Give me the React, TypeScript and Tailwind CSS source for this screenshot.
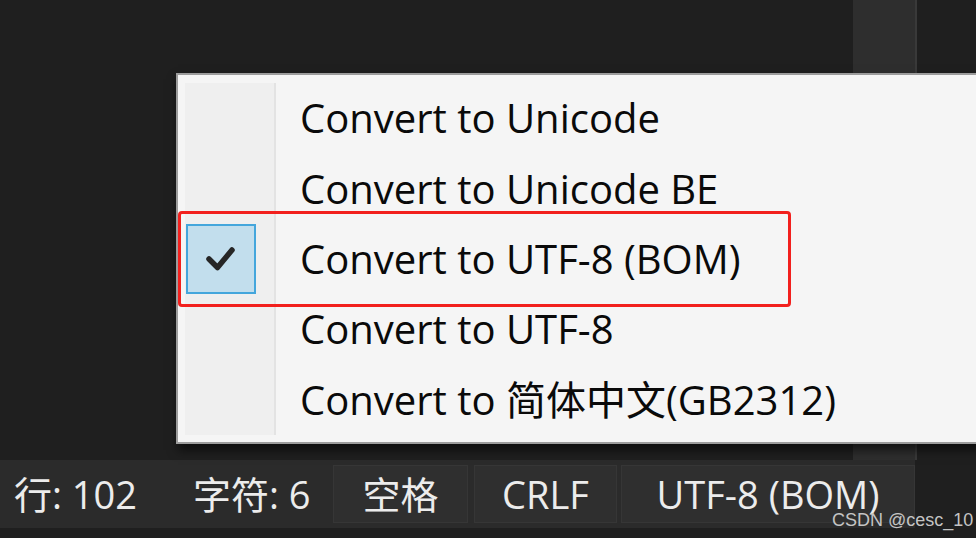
import React from "react";

const items = [
  { label: "Convert to Unicode", checked: false },
  { label: "Convert to Unicode BE", checked: false },
  { label: "Convert to UTF-8 (BOM)", checked: true },
  { label: "Convert to UTF-8", checked: false },
  { label: "Convert to 简体中文(GB2312)", checked: false },
];

function Check() {
  return (
    <svg width="32" height="28" viewBox="0 0 32 28" fill="none">
      <path d="M4 14 L12.5 22.5 L27 5" stroke="#262626" strokeWidth="5.5" strokeLinecap="round" strokeLinejoin="round" />
    </svg>
  );
}

export default function App() {
  return (
    <div className="relative w-[976px] h-[538px] overflow-hidden bg-[#1f1f1f] flex flex-col font-['Open_Sans','Noto_Sans_CJK_SC',sans-serif]">
      {/* editor area with scrollbar column */}
      <div className="h-[460px] flex justify-end pr-[59px]">
        <div className="w-[64px] bg-[#2e2e2e] border-r-2 border-[#393939]" />
      </div>

      {/* status bar */}
      <div className="h-[68px] w-[915px] bg-[#2b2b2b] flex items-center text-[#ececec] text-[38px]">
        <div className="w-[193px] pl-[14px] whitespace-nowrap">行: 102</div>
        <div className="w-[140px] whitespace-nowrap">字符: 6</div>
        <div className="w-[135px] h-[58px] flex items-center justify-center bg-[#2f2f2f] border border-[#363636]">空格</div>
        <div className="ml-[6px] w-[143px] h-[58px] flex items-center justify-center bg-[#2f2f2f] border border-[#363636]">CRLF</div>
        <div className="ml-[4px] w-[294px] h-[58px] flex items-center justify-center bg-[#2f2f2f] border border-[#363636] whitespace-nowrap">UTF-8 (BOM)</div>
      </div>

      {/* context menu */}
      <div className="absolute left-[176px] top-[73px] w-[820px] h-[371px] bg-[#f5f5f5] border-2 border-[#9c9c9c] shadow-[2px_6px_10px_rgba(0,0,0,0.6)] pl-[7px] pt-[8px] flex flex-col">
        {items.map((item) => (
          <div key={item.label} className="h-[70.4px] flex">
            <div className="w-[91px] bg-[#efefef] border-r-2 border-[#e3e3e3] flex items-center">
              {item.checked ? (
                <div className="ml-[1px] w-[70px] h-[70px] bg-[#c2deed] border-2 border-[#44a6dc] flex items-center justify-center">
                  <Check />
                </div>
              ) : null}
            </div>
            <div className="pl-[24px] flex items-center text-[40px] text-[#0a0a0a] whitespace-nowrap">{item.label}</div>
          </div>
        ))}
      </div>

      {/* red annotation */}
      <div className="absolute left-[178px] top-[211px] w-[613px] h-[96px] border-[3px] border-[#f2201d] rounded-[4px]" />

      {/* watermark */}
      <div className="absolute left-[832px] top-[507px] text-[18px] text-[#c4c4c4] font-['Liberation_Sans',Arial,sans-serif] whitespace-nowrap">
        CSDN @cesc_10
      </div>
    </div>
  );
}
